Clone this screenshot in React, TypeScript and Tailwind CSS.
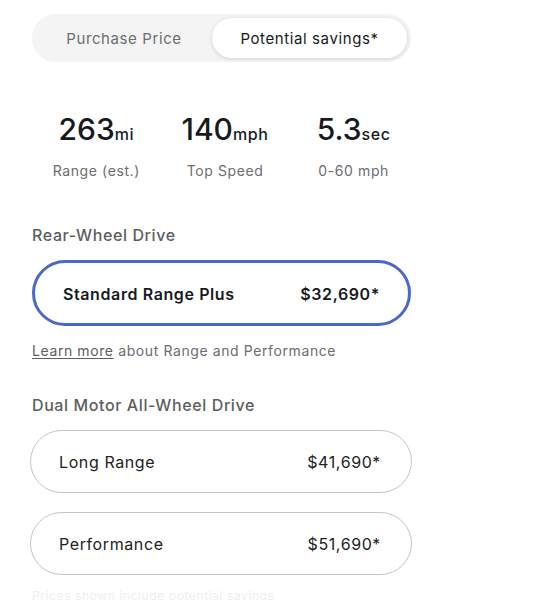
import { useState } from 'react';

const specs = [
    { value: '263', unit: 'mi', label: 'Range (est.)' },
    { value: '140', unit: 'mph', label: 'Top Speed' },
    { value: '5.3', unit: 'sec', label: '0-60 mph' },
];

function TrimCard({ name, price, selected }: { name: string; price: string; selected?: boolean }) {
    return (
        <button
            className={
                selected
                    ? 'w-[379px] h-[66px] rounded-full border-[3px] border-[#4a68c9] flex items-center justify-between pl-[28px] pr-[28px] pt-[1px] text-[16px] font-semibold text-[#171a20]'
                    : 'w-[382px] h-[63px] rounded-full border border-[#c4c4c4] flex items-center justify-between pl-[28px] pr-[30px] pt-[1px] text-[16px] font-normal text-[#222]'
            }
        >
            <span>{name}</span>
            <span>{price}</span>
        </button>
    );
}

export default function App() {
    const [tab, setTab] = useState<'purchase' | 'savings'>('savings');

    return (
        <div className="w-[560px] h-[600px] overflow-hidden bg-white font-['Inter',sans-serif] tracking-[0.6px] text-[#171a20]">
            <div className="pl-[32px] pt-[14px]">
                {/* Price toggle */}
                <div className="w-[379px] h-[48px] rounded-full bg-[#f4f4f4] p-[4px] flex">
                    <button
                        onClick={() => setTab('purchase')}
                        className={`flex-1 rounded-full pt-[2px] text-[15px] ${tab === 'purchase' ? 'bg-white shadow text-[#171a20]' : 'text-[#6b6d70]'}`}
                    >
                        Purchase Price
                    </button>
                    <button
                        onClick={() => setTab('savings')}
                        className={`w-[195px] rounded-full pt-[2px] text-[15px] ${tab === 'savings' ? 'bg-white shadow-[0_1px_4px_rgba(0,0,0,0.15)] text-[#171a20]' : 'text-[#6b6d70]'}`}
                    >
                        Potential savings*
                    </button>
                </div>

                {/* Specs */}
                <div className="grid grid-cols-3 w-[386px] mt-[51px]">
                    {specs.map((s) => (
                        <div key={s.label} className="flex flex-col items-center">
                            <div className="flex items-baseline">
                                <span className="text-[30px] font-medium leading-[32px] tracking-[0px]">{s.value}</span>
                                <span className="text-[16px] font-medium">{s.unit}</span>
                            </div>
                            <div className="mt-[14px] text-[14px] text-[#6b6d70]">{s.label}</div>
                        </div>
                    ))}
                </div>

                {/* Rear-Wheel Drive */}
                <div className="mt-[42px] text-[16px] font-medium text-[#5c5e62]">Rear-Wheel Drive</div>
                <div className="mt-[13px]">
                    <TrimCard name="Standard Range Plus" price="$32,690*" selected />
                </div>
                <div className="mt-[14px] text-[14px] text-[#6b6d70]">
                    <a className="underline underline-offset-2 text-[#5c5e62]">Learn more</a> about Range and Performance
                </div>

                {/* Dual Motor */}
                <div className="mt-[32px] text-[16px] font-medium text-[#5c5e62]">Dual Motor All-Wheel Drive</div>
                <div className="mt-[13px] -ml-[2px] flex flex-col gap-[19px]">
                    <TrimCard name="Long Range" price="$41,690*" />
                    <TrimCard name="Performance" price="$51,690*" />
                </div>
                <div className="mt-[14px] text-[12px] leading-[14px] text-[#eeeeee]">Prices shown include potential savings</div>
            </div>
        </div>
    );
}
